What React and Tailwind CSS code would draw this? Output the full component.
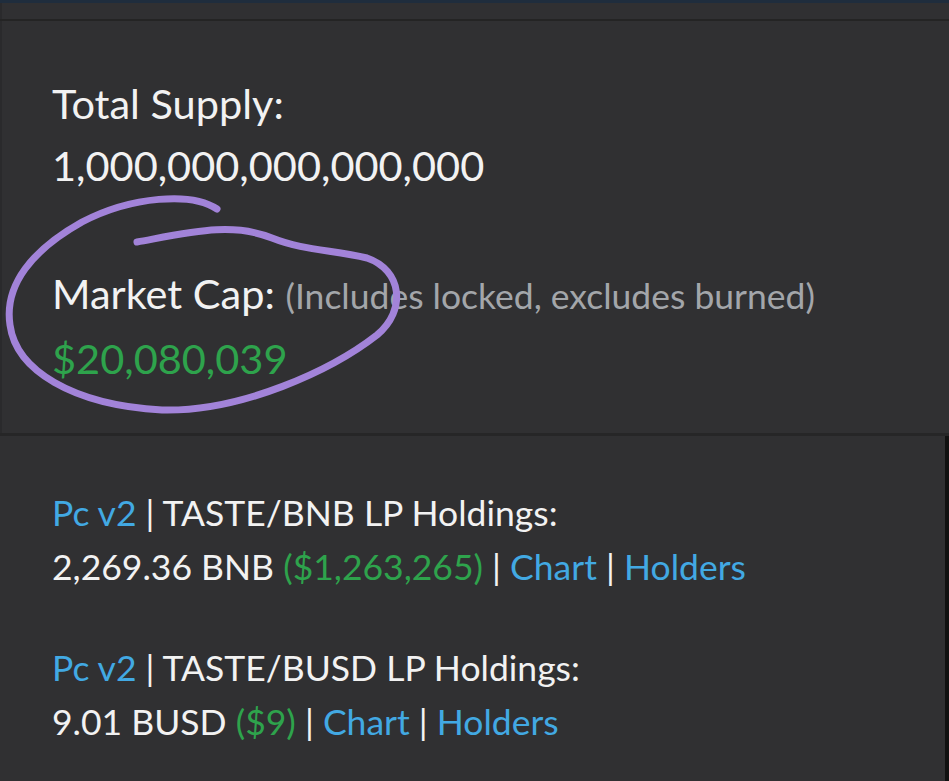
const LP_ROWS = [
  { pair: "TASTE/BNB", amount: "2,269.36 BNB", usd: "($1,263,265)" },
  { pair: "TASTE/BUSD", amount: "9.01 BUSD", usd: "($9)" },
];

function Sep() {
  return <span className="text-[#f2f2f2]"> | </span>;
}

export default function App() {
  return (
    <div className="w-[949px] h-[781px] overflow-hidden bg-[#303032] text-[#f2f2f2] font-['Lato',sans-serif]">
      <div className="h-[3px] bg-[#1f2d3d]" />
      <div className="h-[16px] border-l-2 border-[#2a2a2c]" />
      <div className="h-[2px] bg-[#242424]" />

      {/* supply / market cap */}
      <div className="relative h-[412px] border-l-2 border-[#2a2a2c] pl-[50px] pt-[51px] text-[41.5px] leading-[62px]">
        <div>Total Supply:</div>
        <div>1,000,000,000,000,000</div>
        <div className="mt-[66px]">
          Market Cap: <span className="text-[#a3a6aa] text-[35.5px]">(Includes locked, excludes burned)</span>
        </div>
        <div className="text-[#2ea34c]">$20,080,039</div>

        {/* hand drawn circle */}
        <svg className="absolute left-0 top-[-21px] pointer-events-none" width="420" height="440" viewBox="0 0 420 440">
          <path
            d="M215,209 C190,192 130,196 80,222 C30,250 2,285 8,325 C14,370 70,405 160,410 C240,412 330,370 375,335 C405,310 400,270 365,258 C330,250 300,250 270,238 C230,222 190,232 135,242"
            fill="none"
            stroke="#a283d9"
            strokeWidth="7"
            strokeLinecap="round"
            strokeLinejoin="round"
          />
        </svg>
      </div>

      <div className="h-[3px] bg-[#262627]" />

      {/* LP holdings */}
      <div className="h-[345px] border-r-4 border-[#111111] pl-[52px] pt-[50px] text-[35.5px] leading-[54px]">
        {LP_ROWS.map((row, i) => (
          <div key={row.pair} className={i > 0 ? "mt-[47px]" : ""}>
            <div>
              <span className="text-[#42a9e3]">Pc v2</span>
              <Sep />
              {row.pair} LP Holdings:
            </div>
            <div>
              {row.amount} <span className="text-[#2ea34c]">{row.usd}</span>
              <Sep />
              <span className="text-[#42a9e3]">Chart</span>
              <Sep />
              <span className="text-[#42a9e3]">Holders</span>
            </div>
          </div>
        ))}
      </div>
    </div>
  );
}
